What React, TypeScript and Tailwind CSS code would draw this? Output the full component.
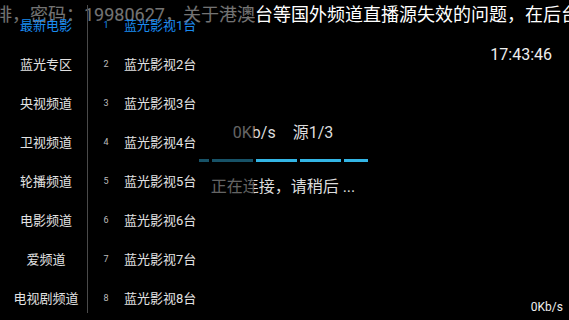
import React from "react";

const categories = ["最新电影", "蓝光专区", "央视频道", "卫视频道", "轮播频道", "电影频道", "爱频道", "电视剧频道"];
const channels = [1, 2, 3, 4, 5, 6, 7, 8];

export default function App() {
  return (
    <div className="w-[569px] h-[320px] bg-black overflow-hidden grid grid-cols-1 grid-rows-1 font-['Roboto','Noto_Sans_CJK_SC',sans-serif]">
      {/* Base video layer */}
      <div className="col-start-1 row-start-1 min-w-0 flex flex-col h-[320px]">
        <div className="h-[30px] flex items-center whitespace-nowrap overflow-hidden">
          <span className="ml-[-6px] text-[18px] leading-[22px] text-white">
            啡，密码：19980627，关于港澳台等国外频道直播源失效的问题，在后台
          </span>
        </div>
        <div className="flex justify-end pr-[17px] mt-[15px]">
          <span className="text-[16px] leading-[20px] text-[#eeeeee]">17:43:46</span>
        </div>
        <div className="flex-1" />
        <div className="flex justify-end pr-[6px] pb-[6px]">
          <span className="text-[12px] leading-[14px] text-[#eeeeee]">0Kb/s</span>
        </div>
      </div>

      {/* Loading layer */}
      <div className="col-start-1 row-start-1 min-w-0 flex items-center justify-center h-[320px]">
        <div className="flex flex-col items-center mr-[3px]">
          <div className="flex gap-[17px] text-[16px] leading-[20px] text-[#dddddd]">
            <span>0Kb/s</span>
            <span>源1/3</span>
          </div>
          <div className="flex gap-[3px] mt-[16px] h-[3px] w-[169px]">
            <div className="w-[10px] bg-[#33b5e5]" />
            <div className="w-[41px] bg-[#33b5e5]" />
            <div className="w-[41px] bg-[#33b5e5]" />
            <div className="w-[41px] bg-[#33b5e5]" />
            <div className="w-[24px] bg-[#33b5e5]" />
          </div>
          <div className="mt-[15px] text-[16px] leading-[20px] text-[#dddddd]">正在连接，请稍后 ...</div>
        </div>
      </div>

      {/* Channel list overlay */}
      <div className="col-start-1 row-start-1 w-[254px] h-[320px] bg-black/55 flex">
        <div className="w-[87px] pl-[5px] pt-[6px] flex flex-col">
          {categories.map((c, i) => (
            <div
              key={c}
              className={`h-[39px] flex items-center justify-center text-[13px] ${i === 0 ? "text-[#1a8cf0]" : "text-[#e2e2e2]"}`}
            >
              {c}
            </div>
          ))}
        </div>
        <div className="w-px bg-[#4a4a4a] mt-[5px] mb-[7px]" />
        <div className="flex-1 pt-[6px] flex flex-col">
          {channels.map((n, i) => (
            <div key={n} className="h-[39px] flex items-center">
              <span className={`w-[36px] text-center text-[9px] ${i === 0 ? "text-[#1a8cf0]" : "text-[#bbbbbb]"}`}>{n}</span>
              <span className={`text-[13px] whitespace-nowrap ${i === 0 ? "text-[#1a8cf0]" : "text-[#e2e2e2]"}`}>蓝光影视{n}台</span>
            </div>
          ))}
        </div>
      </div>
    </div>
  );
}
